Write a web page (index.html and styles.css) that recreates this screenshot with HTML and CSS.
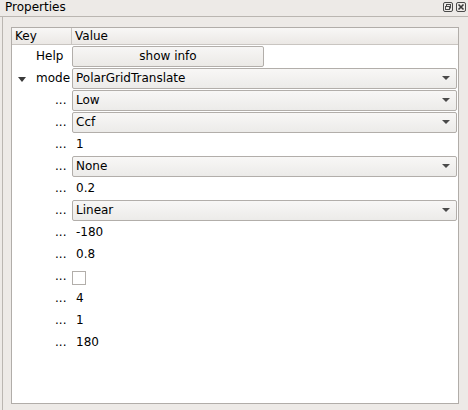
FILE: index.html
```html
<!DOCTYPE html>
<html>
<head>
<meta charset="utf-8">
<link rel="stylesheet" href="styles.css">
</head>
<body>
<div class="dock">
  <div class="titlebar">
    <span class="title">Properties</span>
    <div class="tb-buttons">
      <svg class="tb-icon" width="10" height="10" viewBox="0 0 10 10">
        <rect x="0.5" y="0.5" width="9" height="9" rx="1.5" fill="none" stroke="#4a4a4a"/>
        <rect x="3.5" y="2.5" width="4" height="3.5" fill="none" stroke="#4a4a4a"/>
        <rect x="2.5" y="4.5" width="4" height="3" fill="#edeae7" stroke="#4a4a4a"/>
      </svg>
      <svg class="tb-icon" width="10" height="10" viewBox="0 0 10 10">
        <rect x="0.5" y="0.5" width="9" height="9" rx="1.5" fill="none" stroke="#4a4a4a"/>
        <path d="M2.5 2.5 L7.5 7.5 M7.5 2.5 L2.5 7.5" stroke="#3a3a3a" stroke-width="1.6"/>
      </svg>
    </div>
  </div>
  <div class="dock-body">
    <div class="tree">
      <div class="header">
        <div class="hcell key">Key</div>
        <div class="hcell value">Value</div>
      </div>
      <div class="rows">
        <div class="row">
          <div class="kcell lvl0">Help</div>
          <div class="vcell"><div class="button">show info</div></div>
        </div>
        <div class="row">
          <div class="kcell lvl0"><span class="arrow"></span>mode</div>
          <div class="vcell"><div class="combo"><span>PolarGridTranslate</span><span class="carrow"></span></div></div>
        </div>
        <div class="row">
          <div class="kcell lvl1">...</div>
          <div class="vcell"><div class="combo"><span>Low</span><span class="carrow"></span></div></div>
        </div>
        <div class="row">
          <div class="kcell lvl1">...</div>
          <div class="vcell"><div class="combo"><span>Ccf</span><span class="carrow"></span></div></div>
        </div>
        <div class="row">
          <div class="kcell lvl1">...</div>
          <div class="vcell text">1</div>
        </div>
        <div class="row">
          <div class="kcell lvl1">...</div>
          <div class="vcell"><div class="combo"><span>None</span><span class="carrow"></span></div></div>
        </div>
        <div class="row">
          <div class="kcell lvl1">...</div>
          <div class="vcell text">0.2</div>
        </div>
        <div class="row">
          <div class="kcell lvl1">...</div>
          <div class="vcell"><div class="combo"><span>Linear</span><span class="carrow"></span></div></div>
        </div>
        <div class="row">
          <div class="kcell lvl1">...</div>
          <div class="vcell text">-180</div>
        </div>
        <div class="row">
          <div class="kcell lvl1">...</div>
          <div class="vcell text">0.8</div>
        </div>
        <div class="row">
          <div class="kcell lvl1">...</div>
          <div class="vcell"><div class="checkbox"></div></div>
        </div>
        <div class="row">
          <div class="kcell lvl1">...</div>
          <div class="vcell text">4</div>
        </div>
        <div class="row">
          <div class="kcell lvl1">...</div>
          <div class="vcell text">1</div>
        </div>
        <div class="row">
          <div class="kcell lvl1">...</div>
          <div class="vcell text">180</div>
        </div>
      </div>
    </div>
  </div>
</div>
</body>
</html>
```
FILE: styles.css
```css
html, body {
  margin: 0;
  padding: 0;
}
body {
  width: 468px;
  height: 410px;
  background: #edeae7;
  font-family: "DejaVu Sans", sans-serif;
  font-size: 12px;
  color: #000;
  overflow: hidden;
}
.dock {
  display: flex;
  flex-direction: column;
  height: 410px;
}
.titlebar {
  height: 16px;
  display: flex;
  align-items: center;
  justify-content: space-between;
  border-bottom: 1px solid #bab6b1;
}
.title {
  padding-left: 5px;
  line-height: 14px;
  position: relative;
  top: -1px;
}
.tb-buttons {
  display: flex;
  gap: 3px;
  padding-right: 2px;
  position: relative;
  top: -1px;
}
.tb-icon {
  display: block;
}
.dock-body {
  flex: 1;
  margin-left: 2px;
  border-left: 1px solid #bab6b1;
  padding: 10px 9px 6px 8px;
  display: flex;
}
.tree {
  flex: 1;
  border: 1px solid #b1ada9;
  background: #fff;
  display: flex;
  flex-direction: column;
}
.header {
  display: flex;
  height: 16px;
  border-bottom: 1px solid #c9c5c1;
  background: linear-gradient(#f8f7f6, #ebe8e5);
}
.hcell {
  line-height: 16px;
  padding-left: 3px;
}
.hcell.key {
  width: 56px;
  border-right: 1px solid #c9c5c1;
}
.hcell.value {
  flex: 1;
}
.rows {
  display: flex;
  flex-direction: column;
}
.row {
  display: flex;
  height: 22px;
}
.kcell {
  width: 60px;
  flex: none;
  line-height: 22px;
  position: relative;
}
.kcell.lvl0 {
  padding-left: 24px;
  width: 36px;
}
.kcell.lvl1 {
  padding-left: 43px;
  width: 17px;
}
.arrow {
  position: absolute;
  left: 6px;
  top: 10px;
  width: 0;
  height: 0;
  border-left: 4px solid transparent;
  border-right: 4px solid transparent;
  border-top: 5px solid #3a3a3a;
}
.vcell {
  flex: 1;
  display: flex;
  align-items: center;
  padding-right: 0;
}
.vcell.text {
  padding-left: 4px;
  line-height: 22px;
}
.button {
  width: 190px;
  height: 19px;
  border: 1px solid #b2aeaa;
  border-radius: 2px;
  background: linear-gradient(#f7f6f5, #ebe9e6);
  text-align: center;
  line-height: 19px;
}
.combo {
  flex: 1;
  height: 19px;
  margin-right: 1px;
  border: 1px solid #b2aeaa;
  border-radius: 2px;
  background: linear-gradient(#f8f7f6, #ecebe9);
  display: flex;
  align-items: center;
  justify-content: space-between;
  padding-left: 3px;
  padding-right: 6px;
  line-height: 19px;
}
.carrow {
  width: 0;
  height: 0;
  border-left: 4px solid transparent;
  border-right: 4px solid transparent;
  border-top: 4px solid #4a4a4a;
}
.checkbox {
  width: 12px;
  height: 12px;
  border: 1px solid #b2aeaa;
  background: #fff;
  margin-top: 4px;
}
```
